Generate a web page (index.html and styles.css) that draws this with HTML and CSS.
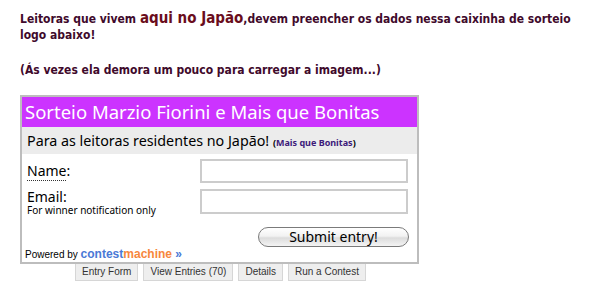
FILE: index.html
```html
<!DOCTYPE html>
<html>
<head>
<meta charset="utf-8">
<link rel="stylesheet" href="styles.css">
</head>
<body>
<div class="page">
  <p class="intro">Leitoras que vivem <span class="big">aqui no Japão</span>,devem preencher os dados nessa caixinha de sorteio logo abaixo!</p>
  <p class="intro note">(Ás vezes ela demora um pouco para carregar a imagem...)</p>

  <div class="widget">
    <div class="title">Sorteio Marzio Fiorini e Mais que Bonitas</div>
    <div class="subtitle">Para as leitoras residentes no Japão! <span class="sub-link">(<span class="purple">Mais que Bonitas</span>)</span></div>
    <div class="form">
      <div class="row">
        <div class="label"><span class="dotted">Name</span>:</div>
        <div class="field"></div>
      </div>
      <div class="row row-email">
        <div class="label label-email">Email:<div class="hint">For winner notification only</div></div>
        <div class="field field-email"></div>
      </div>
      <div class="submit-row">
        <div class="submit">Submit entry!</div>
      </div>
      <div class="powered">Powered by <span class="cm"><span class="blue">contest</span><span class="orange">machine</span> <span class="blue">»</span></span></div>
    </div>
  </div>
  <div class="tabs">
    <div class="tab">Entry Form</div>
    <div class="tab">View Entries (70)</div>
    <div class="tab">Details</div>
    <div class="tab">Run a Contest</div>
  </div>
</div>
</body>
</html>
```

FILE: styles.css
```css
html, body {
  margin: 0;
  padding: 0;
  background: #fff;
}
.page {
  padding: 10px 0 0 20px;
}
.intro {
  margin: 0;
  font-family: "DejaVu Sans Condensed", "DejaVu Sans", Verdana, sans-serif;
  font-stretch: condensed;
  font-weight: bold;
  font-size: 12px;
  line-height: 16px;
  color: #3f0a2c;
  width: 570px;
}
.intro .big {
  font-size: 15px;
  line-height: 16px;
  color: #6a0d1c;
}
.note {
  margin-top: 19px;
}
.widget {
  margin-top: 17px;
  width: 395px;
  border: 2px solid #bdbdbd;
  font-family: "Noto Sans", "Lucida Grande", sans-serif;
  color: #000;
}
.title {
  background: #cc33ff;
  color: #fff;
  height: 30px;
  line-height: 30px;
  font-size: 18.5px;
  padding-left: 3px;
  white-space: nowrap;
}
.subtitle {
  background: #ececec;
  height: 27px;
  line-height: 27px;
  font-size: 14.3px;
  padding-left: 5px;
  white-space: nowrap;
}
.sub-link {
  font-size: 9px;
  font-weight: bold;
}
.purple {
  color: #3d1a7a;
}
.form {
  padding: 5px 9px 0 5px;
}
.row {
  display: flex;
  justify-content: space-between;
  align-items: flex-start;
}
.row-email {
  margin-top: 6px;
}
.label {
  font-size: 14px;
  line-height: 17px;
  padding-top: 3px;
}
.label-email {
  padding-top: 0;
  line-height: 15px;
}
.dotted {
  border-bottom: 1px dotted #333;
}
.hint {
  font-size: 10px;
  line-height: 13px;
}
.field {
  width: 204px;
  height: 20px;
  border: 2px solid #cccccc;
  background: #fff;
}
.field-email {
  height: 21px;
}
.submit-row {
  display: flex;
  justify-content: flex-end;
  margin-top: 10px;
}
.submit {
  width: 149px;
  height: 18px;
  border: 1px solid #7a7a7a;
  border-radius: 10px;
  background: linear-gradient(#ffffff 0%, #f2f2f2 45%, #dcdcdc 55%, #f4f4f4 100%);
  font-size: 14px;
  line-height: 18px;
  text-align: center;
  margin-right: -1px;
}
.powered {
  font-family: "Liberation Sans", Arial, sans-serif;
  font-size: 10px;
  line-height: 13px;
  margin: 1px 0 0 -2px;
  padding-bottom: 1px;
}
.cm {
  font-size: 12px;
  font-weight: bold;
}
.blue {
  color: #4a79d6;
}
.orange {
  color: #f7873d;
}
.tabs {
  display: flex;
  gap: 5px;
  margin-left: 55px;
  font-family: "Liberation Sans", Arial, sans-serif;
  font-size: 10px;
}
.tab {
  background: #eeeeee;
  border: 1px solid #d6d6d6;
  border-top: none;
  color: #333;
  padding: 0 6px;
  height: 16px;
  line-height: 16px;
}
```
